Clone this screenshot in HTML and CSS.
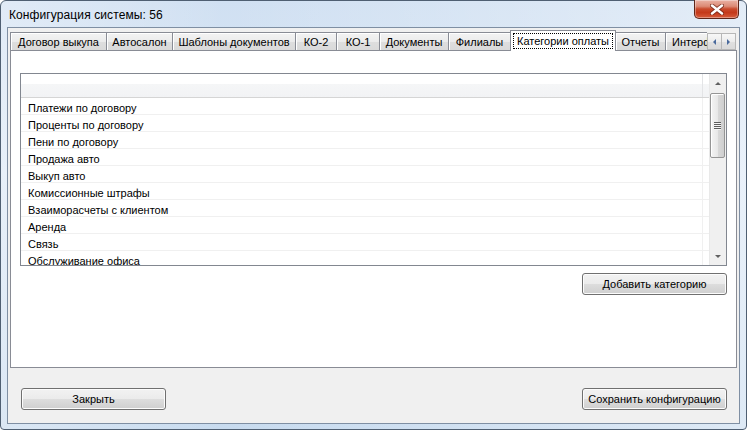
FILE: index.html
```html
<!DOCTYPE html>
<html lang="ru">
<head>
<meta charset="utf-8">
<title>Конфигурация системы: 56</title>
<link rel="stylesheet" href="styles.css">
</head>
<body>
<div class="window">
  <div class="titlebar">
    <div class="title">Конфигурация системы: 56</div>
    <div class="close">
      <svg width="14" height="11" viewBox="0 0 14 11">
        <path d="M2 1.5 L12 9.5 M12 1.5 L2 9.5" stroke="#6a2415" stroke-width="4.2" stroke-linecap="round" fill="none" opacity="0.75"/>
        <path d="M2 1.5 L12 9.5 M12 1.5 L2 9.5" stroke="#ffffff" stroke-width="2.4" stroke-linecap="round" fill="none"/>
      </svg>
    </div>
  </div>
  <div class="client">
    <div class="tabstrip">
      <div class="tabs">
        <div class="tab t1">Договор выкупа</div>
        <div class="tab t2">Автосалон</div>
        <div class="tab t3">Шаблоны документов</div>
        <div class="tab t4">КО-2</div>
        <div class="tab t5">КО-1</div>
        <div class="tab t6">Документы</div>
        <div class="tab t7">Филиалы</div>
        <div class="tab sel t8"><span class="focus">Категории оплаты</span></div>
        <div class="tab t9">Отчеты</div>
        <div class="tab t10">Интерфейс</div>
      </div>
      <div class="arrows">
        <div class="arrow"><span class="tri-left"></span></div>
        <div class="arrow"><span class="tri-right"></span></div>
      </div>
    </div>
    <div class="panel">
      <div class="list">
        <div class="list-body">
          <div class="header"><div class="hcol"></div><div class="hrest"></div></div>
          <div class="rows">
            <div class="row"><div class="cell">Платежи по договору</div><div class="rest"></div></div>
            <div class="row"><div class="cell">Проценты по договору</div><div class="rest"></div></div>
            <div class="row"><div class="cell">Пени по договору</div><div class="rest"></div></div>
            <div class="row"><div class="cell">Продажа авто</div><div class="rest"></div></div>
            <div class="row"><div class="cell">Выкуп авто</div><div class="rest"></div></div>
            <div class="row"><div class="cell">Комиссионные штрафы</div><div class="rest"></div></div>
            <div class="row"><div class="cell">Взаиморасчеты с клиентом</div><div class="rest"></div></div>
            <div class="row"><div class="cell">Аренда</div><div class="rest"></div></div>
            <div class="row"><div class="cell">Связь</div><div class="rest"></div></div>
            <div class="row"><div class="cell">Обслуживание офиса</div><div class="rest"></div></div>
          </div>
        </div>
        <div class="scrollbar">
          <div class="sb-btn"><span class="tri-up"></span></div>
          <div class="sb-track">
            <div class="thumb">
              <div class="grip"><i></i><i></i><i></i><i></i></div>
            </div>
          </div>
          <div class="sb-btn"><span class="tri-down"></span></div>
        </div>
      </div>
      <div class="panel-actions">
        <button class="btn">Добавить категорию</button>
      </div>
    </div>
    <div class="footer">
      <button class="btn">Закрыть</button>
      <button class="btn">Сохранить конфигурацию</button>
    </div>
  </div>
</div>
</body>
</html>
```
FILE: styles.css
```css
* { box-sizing: border-box; }
html, body { margin: 0; padding: 0; }
body {
  width: 747px;
  height: 430px;
  overflow: hidden;
  font-family: "Liberation Sans", Arial, sans-serif;
  font-size: 11px;
  color: #000;
  background: #ffffff;
}
.window {
  width: 747px;
  height: 430px;
  display: flex;
  flex-direction: column;
  padding: 0 6px 5px 6px;
  border: 1px solid #4f5f72;
  border-radius: 6px 6px 4px 4px;
  background:
    linear-gradient(90deg, rgba(255,255,255,0.35) 0%, rgba(255,255,255,0) 30%, rgba(255,255,255,0.15) 60%, rgba(255,255,255,0.4) 100%),
    linear-gradient(180deg, #d0e0f2 0%, #dce8f6 40%, #c8dbef 100%);
}
.titlebar {
  height: 26px;
  display: flex;
  justify-content: space-between;
  align-items: flex-start;
  flex: none;
}
.title {
  font-size: 12px;
  padding: 7px 0 0 2px;
  color: #000;
  letter-spacing: 0.1px;
}
.close {
  width: 45px;
  height: 19px;
  margin-top: -1px;
  margin-right: 1px;
  border: 1px solid #5e2518;
  border-top: none;
  border-radius: 0 0 5px 5px;
  background: linear-gradient(180deg, #eab2a4 0%, #dc8a75 35%, #c94a2c 50%, #c4391a 70%, #d65c3c 100%);
  box-shadow: inset 0 0 0 1px rgba(255,255,255,0.35);
  display: flex;
  align-items: center;
  justify-content: center;
}
.client {
  flex: 1;
  display: flex;
  flex-direction: column;
  background: #f0f0f0;
  border: 1px solid #7f8fa3;
}
.tabstrip {
  height: 23px;
  flex: none;
  display: flex;
  align-items: flex-end;
  padding-left: 2px;
}
.tabs {
  width: 697px;
  height: 23px;
  overflow: hidden;
  display: flex;
  align-items: flex-end;
  flex: none;
}
.tab {
  flex: none;
  height: 19px;
  margin-right: -1px;
  border: 1px solid #898c95;
  border-bottom: none;
  background: linear-gradient(180deg, #f3f3f3 0%, #ebebeb 50%, #dedede 51%, #d9d9d9 100%);
  box-shadow: inset 1px 1px 0 #ffffff;
  display: flex;
  align-items: center;
  justify-content: center;
  white-space: nowrap;
  padding-bottom: 1px;
}
.tab.sel {
  position: relative;
  z-index: 2;
  height: 21px;
  background: #ffffff;
  box-shadow: none;
  padding-bottom: 1px;
}
.focus {
  outline: 1px dotted #000;
  padding: 1px 3px 1px 3px;
}
.t1 { width: 97px; }
.t2 { width: 67px; }
.t3 { width: 124px; }
.t4 { width: 42px; }
.t5 { width: 44px; }
.t6 { width: 70px; }
.t7 { width: 63px; }
.t8 { width: 106px; }
.t9 { width: 51px; }
.t10 { width: 62px; justify-content: flex-start; padding-left: 6px; }
.arrows {
  display: flex;
  margin-bottom: 1px;
  flex: none;
}
.arrow {
  width: 15px;
  height: 17px;
  margin-right: -1px;
  border: 1px solid #b7b7b7;
  background: linear-gradient(180deg, #f7f7f7 0%, #ececec 50%, #e0e0e0 51%, #dadada 100%);
  display: flex;
  align-items: center;
  justify-content: center;
}
.tri-left {
  width: 0; height: 0;
  border-top: 3px solid transparent;
  border-bottom: 3px solid transparent;
  border-right: 3px solid #4a6a9c;
}
.tri-right {
  width: 0; height: 0;
  border-top: 3px solid transparent;
  border-bottom: 3px solid transparent;
  border-left: 3px solid #4a6a9c;
}
.panel {
  position: relative;
  z-index: 1;
  margin: -1px 2px 0 2px;
  height: 318px;
  flex: none;
  background: #ffffff;
  border: 1px solid #898c95;
  padding: 22px 9px 0 9px;
  display: flex;
  flex-direction: column;
}
.list {
  height: 193px;
  border: 1px solid #828790;
  display: flex;
  background: #fff;
}
.list-body {
  flex: 1;
  overflow: hidden;
  display: flex;
  flex-direction: column;
}
.header {
  height: 24px;
  flex: none;
  display: flex;
  background: linear-gradient(180deg, #ffffff 0%, #ffffff 42%, #f5f6f7 43%, #f2f3f5 100%);
  border-bottom: 1px solid #d5d5d5;
}
.hcol {
  width: 682px;
  border-right: 1px solid #e3e4e6;
}
.hrest { flex: 1; }
.rows {
  flex: 1;
  overflow: hidden;
}
.row {
  height: 17px;
  display: flex;
}
.cell {
  width: 682px;
  border-right: 1px solid #f0f0f0;
  border-bottom: 1px solid #f0f0f0;
  padding: 3px 0 0 7px;
  white-space: nowrap;
  line-height: 14px;
  overflow: hidden;
}
.rest {
  flex: 1;
  border-bottom: 1px solid #f0f0f0;
}
.scrollbar {
  width: 17px;
  flex: none;
  display: flex;
  flex-direction: column;
  background: #f0f0f0;
  border-left: 1px solid #e9e9e9;
}
.sb-btn {
  height: 18px;
  flex: none;
  display: flex;
  align-items: center;
  justify-content: center;
}
.tri-up {
  width: 0; height: 0;
  border-left: 3px solid transparent;
  border-right: 3px solid transparent;
  border-bottom: 3px solid #606060;
}
.tri-down {
  width: 0; height: 0;
  border-left: 3px solid transparent;
  border-right: 3px solid transparent;
  border-top: 3px solid #606060;
}
.sb-track {
  flex: 1;
  padding: 1px 0 0 0;
}
.thumb {
  height: 65px;
  width: 15px;
  border: 1px solid #959595;
  border-radius: 2px;
  background: linear-gradient(90deg, #f4f4f4 0%, #e8e8e8 50%, #d9d9d9 51%, #cfcfcf 100%);
  box-shadow: inset 1px 1px 0 #ffffff;
  display: flex;
  align-items: center;
  justify-content: center;
}
.grip {
  display: flex;
  flex-direction: column;
  gap: 1px;
}
.grip i {
  display: block;
  width: 7px;
  height: 1px;
  background: #5d5d5d;
  box-shadow: 0 1px 0 #f4f4f4;
}
.panel-actions {
  display: flex;
  justify-content: flex-end;
  margin-top: 7px;
}
.btn {
  width: 145px;
  height: 22px;
  border: 1px solid #707070;
  border-radius: 3px;
  background: linear-gradient(180deg, #f2f2f2 0%, #ebebeb 50%, #dddddd 51%, #cfcfcf 100%);
  box-shadow: inset 0 0 0 1px #fcfcfc;
  font-family: "Liberation Sans", Arial, sans-serif;
  font-size: 11px;
  color: #000;
  padding: 0;
  margin: 0;
}
.footer {
  flex: 1;
  display: flex;
  justify-content: space-between;
  align-items: flex-start;
  padding: 20px 12px 0 13px;
}
```
